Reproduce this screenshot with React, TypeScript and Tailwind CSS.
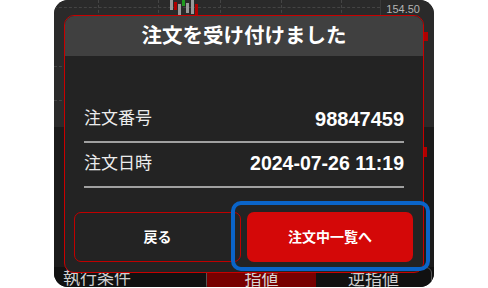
import React from 'react';

const jp = { fontFamily: '"Liberation Sans", "Noto Sans CJK JP", sans-serif' };

const candles = [
  { x: 0, top: 0, h: 10, color: 'bg-[#9a9a9a]' },
  { x: 4, top: 2, h: 8, color: 'bg-[#b00000]' },
  { x: 8, top: 4, h: 12, color: 'bg-[#9a9a9a]' },
  { x: 12, top: 0, h: 6, color: 'bg-[#1f9a1f]' },
  { x: 16, top: 3, h: 10, color: 'bg-[#9a9a9a]' },
  { x: 21, top: 0, h: 14, color: 'bg-[#9a9a9a]' },
  { x: 25, top: 4, h: 12, color: 'bg-[#b00000]' },
];

function Chart() {
  return (
    <div className="relative h-[127px] bg-[#2a2a2a] rounded-t-[14px] overflow-hidden">
      {/* grid */}
      <div className="absolute left-0 right-[54px] top-[7px] border-t border-dashed border-[#444]" />
      <div className="absolute left-0 right-[54px] top-[66px] border-t border-dashed border-[#444]" />
      <div className="absolute left-0 right-[54px] top-[100px] border-t border-dashed border-[#444]" />
      {[44, 104, 166, 227, 287].map(x => (
        <div key={x} className="absolute top-0 bottom-0 border-l border-dashed border-[#444]" style={{ left: x }} />
      ))}
      <div className="absolute top-0 bottom-0 right-[53px] border-l border-[#3a3a3a]" />
      {/* candles */}
      <div className="absolute left-[116px] top-0 w-[32px] h-[18px]">
        {candles.map((c, i) => (
          <div key={i} className={`absolute w-[3px] ${c.color}`} style={{ left: c.x, top: c.top, height: c.h }} />
        ))}
      </div>
      <div className="absolute right-[14px] top-[1px] text-[11px] text-[#b4b4b4]" style={jp}>154.50</div>
      <div className="absolute right-[6px] top-[32px] w-[4px] h-[9px] bg-[#b00000]" />
    </div>
  );
}

export default function App() {
  return (
    <div className="relative w-[488px] h-[288px] bg-white overflow-hidden" style={jp}>
      <div className="relative ml-[54px] w-[380px] h-[287px] flex flex-col rounded-[14px] bg-[#1b1b1b] overflow-hidden">
        <Chart />
        <div className="relative flex-1 bg-[#1b1b1b]">
          <div className="absolute right-[7px] top-[20px] w-[3px] h-[10px] bg-[#b00000]" />
        </div>
        <div className="h-[20px] bg-[#111] flex items-start">
          <div className="ml-[9px] w-[143px] text-[17px] text-[#cfcfcf] leading-none pt-[3px]">執行条件</div>
          <div className="flex-1 h-[24px] mr-[2px] border border-[#555] rounded-[6px] flex overflow-hidden">
            <div className="w-[109px] bg-[#780000] flex justify-center pt-[3px] text-[17px] text-[#d6d6d6] leading-none">指値</div>
            <div className="flex-1 flex justify-center pt-[3px] text-[17px] text-[#cfcfcf] leading-none">逆指値</div>
          </div>
        </div>
      </div>

      {/* modal */}
      <div className="absolute left-[64px] top-[15px] w-[360px] h-[258px] border border-[#c80000] rounded-[10px] overflow-hidden bg-[#232323] flex flex-col">
        <div className="h-[40px] bg-[#404040] flex items-center justify-center text-white text-[20.5px] font-bold">
          注文を受け付けました
        </div>
        <div className="pt-[42px] px-[19px]">
          <div className="h-[45px] pb-[2px] border-b-2 border-[#a0a0a0] flex items-center justify-between">
            <span className="text-[17px] text-[#ececec]">注文番号</span>
            <span className="text-[20px] font-bold text-white">98847459</span>
          </div>
          <div className="h-[45px] pb-[2px] border-b-2 border-[#a0a0a0] flex items-center justify-between">
            <span className="text-[17px] text-[#ececec]">注文日時</span>
            <span className="text-[19.5px] font-bold text-white">2024-07-26 11:19</span>
          </div>
        </div>
        <div className="mt-[24px] pl-[9px] pr-[10px] flex gap-[6px]">
          <button className="w-[167px] h-[50px] border border-[#c00000] rounded-[7px] bg-[#232323] text-white text-[14px] font-bold">
            戻る
          </button>
          <button className="w-[166px] h-[50px] rounded-[7px] bg-[#d40808] text-white text-[14px] font-bold">
            注文中一覧へ
          </button>
        </div>
      </div>

      {/* highlight */}
      <div className="absolute left-[231px] top-[201px] w-[199px] h-[70px] border-4 border-[#0a64c8] rounded-[10px]" />
    </div>
  );
}
